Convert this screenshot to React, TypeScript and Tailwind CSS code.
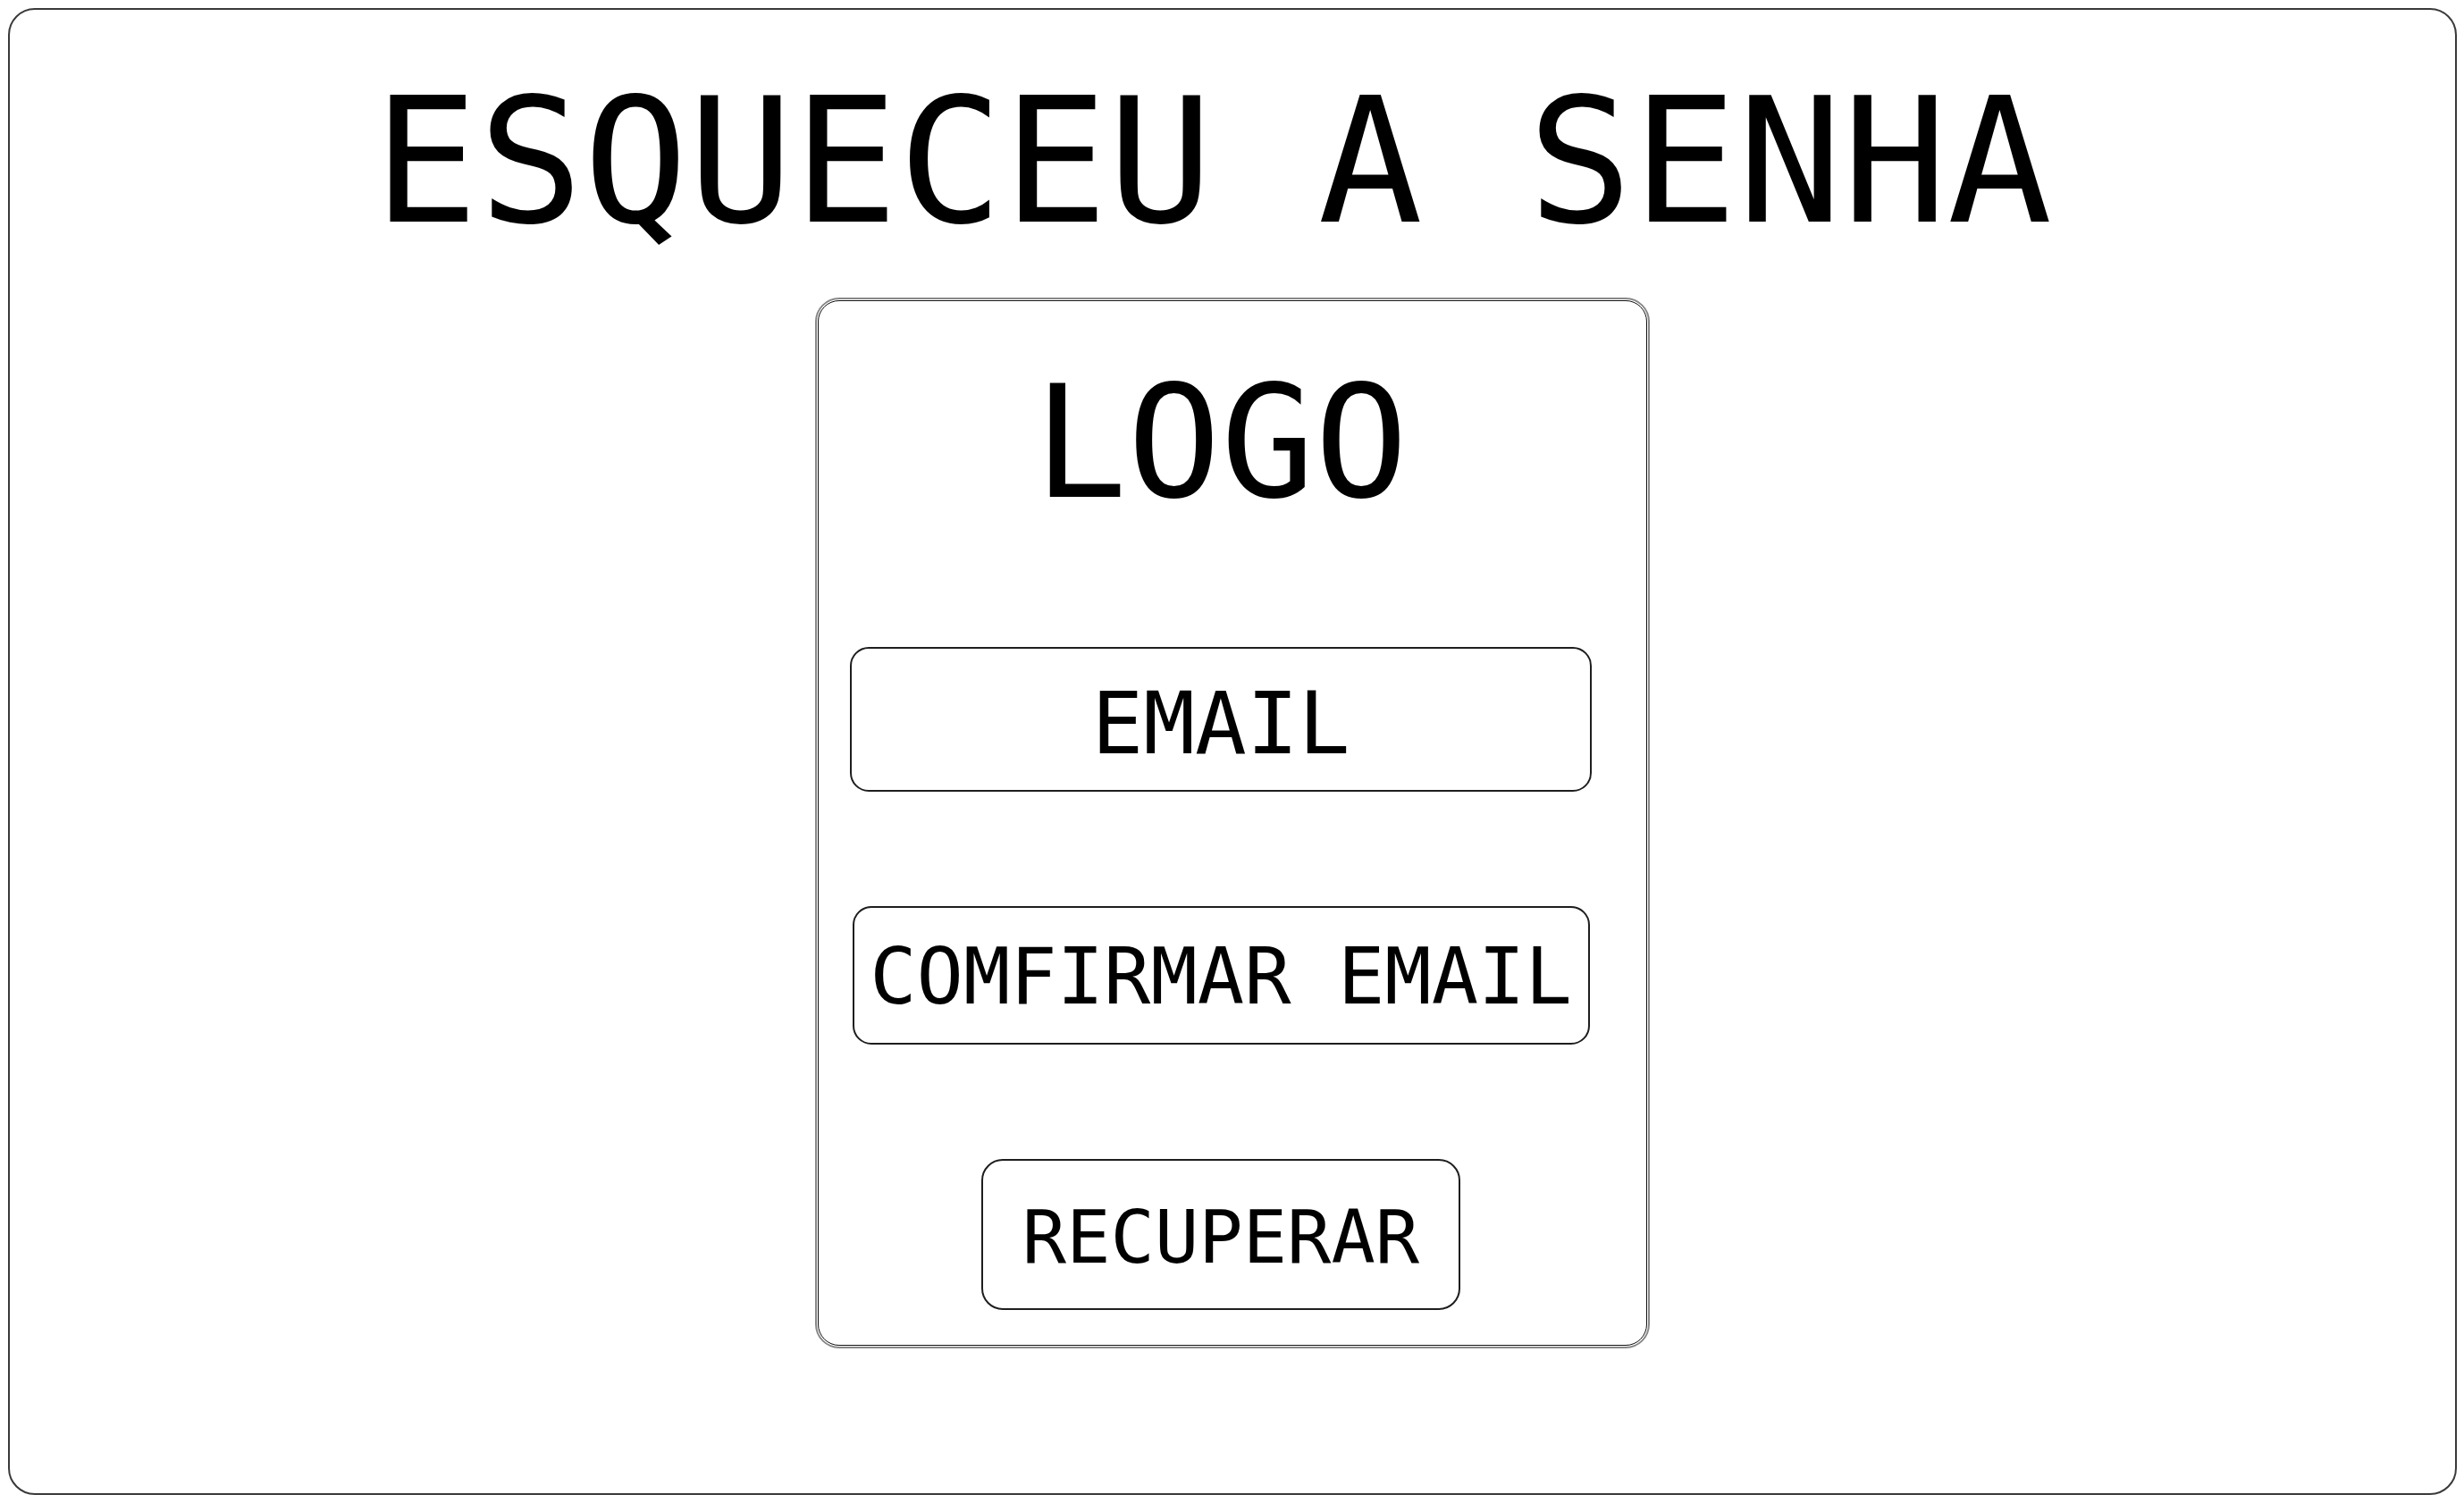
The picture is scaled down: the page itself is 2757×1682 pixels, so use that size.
// Tela "Esqueceu a senha" – esboço de wireframe
export default function App() {
	return (
		<div className="w-[2757px] h-[1682px] bg-white pt-[9px] pl-[9px] font-['DejaVu_Sans_Mono',monospace] text-black">
			{/* Moldura externa */}
			<div className="w-[2740px] h-[1664px] border-2 border-[#3a3a3a] rounded-[30px] flex flex-col items-center pt-[72px]">
				{/* Título */}
				<h1 className="text-[195px] leading-none whitespace-pre mr-[44px]">ESQUECEU A SENHA</h1>

				{/* Cartão central (traço duplo de esboço) */}
				<div className="mt-[55px] w-[934px] h-[1176px] border-2 border-[#888] outline-1 outline-[#111] outline-offset-[-4px] rounded-[27px] flex flex-col items-center pr-[26px] pt-[74px]">
					<div className="text-[174px] leading-none">LOGO</div>

					{/* Campo de email */}
					<div className="mt-[141px] w-[830px] h-[162px] border-2 border-[#1e1e1e] rounded-[21px] flex items-center justify-center pt-[10px]">
						<span className="text-[96px] leading-none">EMAIL</span>
					</div>

					{/* Confirmação de email */}
					<div className="mt-[128px] w-[825px] h-[155px] border-2 border-[#1e1e1e] rounded-[21px] flex items-center justify-center pt-[4px]">
						<span className="text-[87px] leading-none whitespace-pre">COMFIRMAR EMAIL</span>
					</div>

					{/* Botão recuperar */}
					<button className="mt-[128px] w-[536px] h-[169px] border-2 border-[#1e1e1e] rounded-[24px] flex items-center justify-center pt-[6px]">
						<span className="text-[82px] leading-none">RECUPERAR</span>
					</button>
				</div>
			</div>
		</div>
	);
}
